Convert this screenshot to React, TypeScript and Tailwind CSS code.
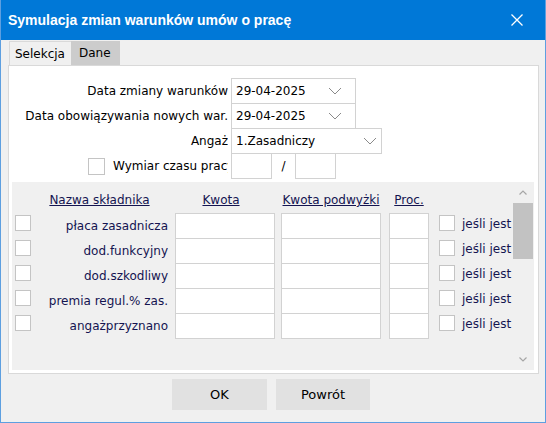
import type { ReactNode } from 'react';

const font = { fontFamily: '"DejaVu Sans", sans-serif' };

const rows = [
  'płaca zasadnicza',
  'dod.funkcyjny',
  'dod.szkodliwy',
  'premia regul.% zas.',
  'angażprzyznano',
];

function Chevron({ className }: { className?: string }) {
  return (
    <svg width="14" height="8" viewBox="0 0 14 8" className={className}>
      <path d="M1 1 L7 7 L13 1" fill="none" stroke="#8a8a8a" strokeWidth="1" />
    </svg>
  );
}

function Check({ size = 'w-[16px] h-[16px]' }: { size?: string }) {
  return <div className={`${size} shrink-0 border border-[#c4c4c4] bg-white`} />;
}

function Box({ className, children }: { className?: string; children?: ReactNode }) {
  return (
    <div
      className={`h-[26px] border border-[#d2d2d2] bg-white flex items-center shrink-0 ${className ?? ''}`}
    >
      {children}
    </div>
  );
}

function FormRow({ label, children, first }: { label: ReactNode; children: ReactNode; first?: boolean }) {
  return (
    <div className={`flex items-center ${first ? '' : '-mt-px'}`}>
      <div className="w-[219px] mr-[3px] text-right whitespace-nowrap overflow-hidden">{label}</div>
      {children}
    </div>
  );
}

export default function App() {
  return (
    <div
      className="w-[546px] h-[423px] bg-[#f0f0f0] border-x border-b border-[#5d9fe0] flex flex-col text-[12px] text-black overflow-hidden"
      style={font}
    >
      {/* title bar */}
      <div className="h-[40px] bg-[#0078d7] flex items-center pl-[7px] pr-[22px] text-white shrink-0">
        <span
          className="text-[14px] font-bold flex-1"
          style={{ fontFamily: '"Liberation Sans", sans-serif' }}
        >
          Symulacja zmian warunków umów o pracę
        </span>
        <svg width="12" height="12" viewBox="0 0 12 12">
          <path d="M0.5 0.5 L11.5 11.5 M11.5 0.5 L0.5 11.5" stroke="white" strokeWidth="1.3" />
        </svg>
      </div>

      {/* tabs */}
      <div className="h-[25px] flex items-end pl-[8px] shrink-0">
        <div className="h-[24px] w-[62px] border-t border-l border-[#d9d9d9] bg-[#f0f0f0] flex items-center pl-[5px]">
          Selekcja
        </div>
        <div className="h-[24px] w-[49px] bg-[#cccccc] flex items-center pl-[8px]">Dane</div>
      </div>

      {/* panel */}
      <div className="ml-[7px] w-[531px] h-[309px] border border-[#d9d9d9] bg-white flex flex-col shrink-0">
        <div className="pt-[12px] flex flex-col">
          <FormRow first label="Data zmiany warunków">
            <Box className="w-[125px] pl-[4px] justify-between pr-[13px]">
              <span>29-04-2025</span>
              <Chevron />
            </Box>
          </FormRow>
          <FormRow label="Data obowiązywania nowych war.">
            <Box className="w-[125px] pl-[4px] justify-between pr-[13px]">
              <span>29-04-2025</span>
              <Chevron />
            </Box>
          </FormRow>
          <FormRow label="Angaż">
            <Box className="w-[151px] pl-[4px] justify-between pr-[4px]">
              <span>1.Zasadniczy</span>
              <Chevron />
            </Box>
          </FormRow>
          <FormRow
            label={
              <div className="flex items-center pl-[79px]">
                <Check size="w-[17px] h-[17px]" />
                <span className="ml-[8px] whitespace-nowrap">Wymiar czasu pracy</span>
              </div>
            }
          >
            <Box className="w-[41px]" />
            <span className="w-[23px] text-center">/</span>
            <Box className="w-[41px]" />
          </FormRow>
        </div>

        {/* components list */}
        <div className="mt-[3px] ml-[3px] w-[522px] h-[188px] bg-[#f0f0f0] flex text-[#141450]">
          <div className="flex-1 overflow-hidden">
            <div className="h-[31px] pt-[11px] flex leading-[14px] whitespace-nowrap">
              <div className="ml-[19px] w-[137px] text-center underline">Nazwa składnika</div>
              <div className="ml-[7px] w-[92px] text-center underline">Kwota</div>
              <div className="ml-[14px] w-[100px] text-center underline">Kwota podwyżki</div>
              <div className="ml-[8px] w-[40px] text-center underline">Proc.</div>
            </div>
            {rows.map((name, i) => (
              <div key={name} className={`flex items-start whitespace-nowrap ${i ? '-mt-px' : ''}`}>
                <div className="ml-[3px] mt-[2px]">
                  <Check />
                </div>
                <div className="w-[137px] h-[26px] flex items-center justify-end">{name}</div>
                <Box className="ml-[7px] w-[100px]" />
                <Box className="ml-[6px] w-[100px]" />
                <Box className="ml-[8px] w-[40px]" />
                <div className="ml-[10px] mt-[2px]">
                  <Check />
                </div>
                <div className="ml-[7px] h-[22px] flex items-center">jeśli jest</div>
              </div>
            ))}
          </div>
          <div className="w-[20px] mr-[1px] flex flex-col items-center shrink-0">
            <div className="h-[21px] flex items-center justify-center">
              <svg width="8" height="5" viewBox="0 0 8 5">
                <path d="M0.5 4.5 L4 1 L7.5 4.5" fill="none" stroke="#a6a6a6" strokeWidth="1.2" />
              </svg>
            </div>
            <div className="w-[20px] h-[56px] bg-[#c2c2c2]" />
            <div className="flex-1" />
            <div className="h-[21px] flex items-center justify-center">
              <svg width="8" height="5" viewBox="0 0 8 5">
                <path d="M0.5 0.5 L4 4 L7.5 0.5" fill="none" stroke="#a6a6a6" strokeWidth="1.2" />
              </svg>
            </div>
          </div>
        </div>
      </div>

      {/* buttons */}
      <div className="mt-[5px] ml-[171px] flex gap-[9px] text-[13px]">
        <button className="w-[95px] h-[31px] bg-[#e1e1e1]">OK</button>
        <button className="w-[94px] h-[31px] bg-[#e1e1e1]">Powrót</button>
      </div>
    </div>
  );
}
